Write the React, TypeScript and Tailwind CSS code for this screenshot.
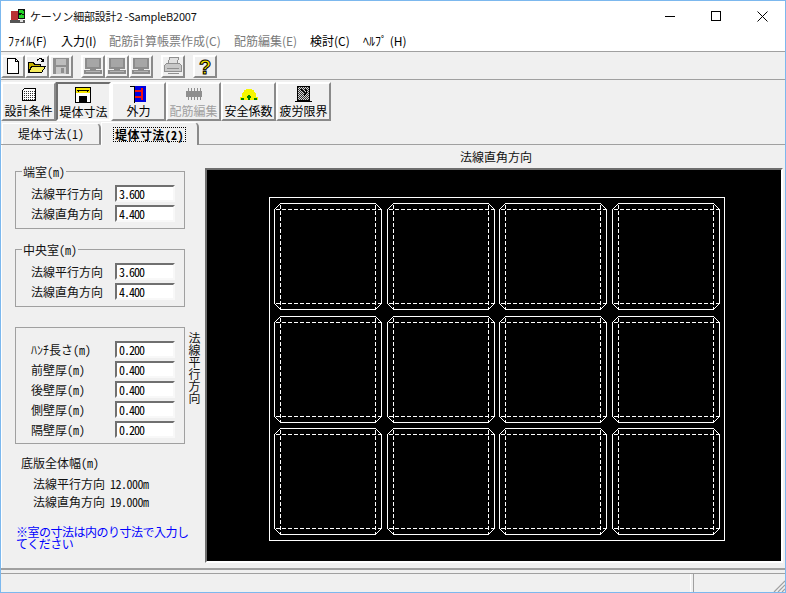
const jp = "font-['Noto_Sans_CJK_JP','Noto_Sans',sans-serif]";
const half = "[font-feature-settings:'hwid']";

function Cell({ x, y }: { x: number; y: number }) {
  const w = 107;
  const h = 106;
  const c = 6;
  const x1 = x + w;
  const y1 = y + h;
  return (
    <g>
      <polygon
        points={`${x + c},${y} ${x1 - c},${y} ${x1},${y + c} ${x1},${y1 - c} ${x1 - c},${y1} ${x + c},${y1} ${x},${y1 - c} ${x},${y + c}`}
        fill="none"
        stroke="#fff"
      />
      <g stroke="#fff" strokeDasharray="4 2" fill="none">
        <path d={`M${x + 1} ${y + c}H${x1 - 1}`} />
        <path d={`M${x + 1} ${y1 - c}H${x1 - 1}`} />
        <path d={`M${x + c} ${y + 1}V${y1 - 1}`} />
        <path d={`M${x1 - c} ${y + 1}V${y1 - 1}`} />
      </g>
    </g>
  );
}

function Drawing() {
  const xs = [67.5, 180.5, 292.5, 405.5];
  const ys = [33.5, 146.5, 258.5];
  return (
    <svg width="574" height="391" viewBox="0 0 574 391" shapeRendering="crispEdges" className="block bg-black">
      <rect x="62.5" y="27.5" width="455" height="343" fill="none" stroke="#fff" />
      {ys.map((y) => xs.map((x) => <Cell key={`${x}-${y}`} x={x} y={y} />))}
    </svg>
  );
}

function SmallBtn({ children, className = "" }: { children: React.ReactNode; className?: string }) {
  return (
    <div
      className={`w-6 h-[23px] flex items-center justify-center border-2 border-t-white border-l-white border-r-[#8a8a8a] border-b-[#8a8a8a] ${className}`}
    >
      {children}
    </div>
  );
}

function IconSvg({ children, size = 16 }: { children: React.ReactNode; size?: number }) {
  return (
    <svg width={size} height={size} viewBox={`0 0 ${size} ${size}`} shapeRendering="crispEdges" className="block">
      {children}
    </svg>
  );
}

function Monitor() {
  return (
    <IconSvg size={18}>
      <rect x="1" y="1" width="16" height="11" fill="#8c8c8c" />
      <rect x="3" y="2" width="12" height="8" fill="#a6a6a6" />
      <rect x="6" y="12" width="6" height="1" fill="#8c8c8c" />
      <rect x="0" y="13" width="18" height="4" fill="#8c8c8c" />
      <rect x="2" y="14" width="14" height="1" fill="#b4b4b4" />
    </IconSvg>
  );
}

function BigBtn({
  label,
  icon,
  pressed,
  disabled,
}: {
  label: string;
  icon: React.ReactNode;
  pressed?: boolean;
  disabled?: boolean;
}) {
  return (
    <div
      className={`w-[55px] h-[39px] flex flex-col items-center border-2 ${
        pressed
          ? "border-t-[#6e6e6e] border-l-[#6e6e6e] border-r-white border-b-white pt-[2px]"
          : "border-t-white border-l-white border-r-[#8a8a8a] border-b-[#8a8a8a] pt-px"
      }`}
    >
      <div className="h-[18px] flex items-center justify-center">{icon}</div>
      <div className={`text-xs leading-[15px] whitespace-nowrap ${disabled ? "text-[#a0a0a0]" : "text-black"}`}>
        {label}
      </div>
    </div>
  );
}

function Field({ label, value }: { label: string; value: string }) {
  return (
    <div className="flex items-center h-[17px]">
      <div className={`w-[84px] text-xs leading-[17px] text-[#111] whitespace-nowrap ${half}`}>{label}</div>
      <input
        readOnly
        value={value}
        className={`w-[60px] h-[17px] bg-white pl-[2px] text-xs leading-none tracking-[-1px] text-black outline-none border-2 border-t-[#707070] border-l-[#707070] border-r-[#f8f8f8] border-b-[#f8f8f8] ${half}`}
      />
    </div>
  );
}

function Group({ title, fields }: { title: string; fields: string[][] }) {
  return (
    <div className="relative w-[170px] h-[58px] border border-[#a0a0a0] pl-[15px] pt-[13px] flex flex-col gap-[3px]">
      <div className={`absolute left-[6px] top-[-8px] bg-[#f0f0f0] px-[1px] text-xs leading-[15px] text-[#111] ${half}`}>
        {title}
      </div>
      {fields.map(([l, v]) => (
        <Field key={l} label={l} value={v} />
      ))}
    </div>
  );
}

export default function App() {
  return (
    <div
      className={`w-[786px] h-[593px] flex flex-col overflow-hidden bg-[#f0f0f0] border border-[#7cb8ee] text-black ${jp}`}
    >
      {/* タイトルバー */}
      <div className="h-[30px] shrink-0 bg-white flex items-center">
        <div className="ml-[8px] mr-[4px]">
          <IconSvg size={17}>
            <rect x="2" y="3" width="7" height="10" fill="#b83232" />
            <rect x="1" y="12" width="15" height="3" fill="#555" />
            <rect x="9" y="1" width="7" height="10" fill="#111" />
            <path d="M10 2h4v1h1v3h-3v1h3v3h-5V7h3V5h-3z" fill="#22d428" />
            <rect x="11" y="11" width="3" height="3" fill="#ddd" />
          </IconSvg>
        </div>
        <div className="text-[11px] tracking-[-0.2px] text-[#111] whitespace-nowrap">ケーソン細部設計2 -SampleB2007</div>
        <div className="ml-auto flex h-full">
          <div className="w-[46px] flex items-center justify-center">
            <div className="w-[10px] h-px bg-black" />
          </div>
          <div className="w-[46px] flex items-center justify-center">
            <div className="w-[10px] h-[10px] border border-black" />
          </div>
          <div className="w-[46px] flex items-center justify-center">
            <svg width="11" height="11" viewBox="0 0 11 11" stroke="#000" fill="none">
              <path d="M0.5 0.5l10 10M10.5 0.5l-10 10" />
            </svg>
          </div>
        </div>
      </div>

      {/* メニュー */}
      <div className="h-[20px] shrink-0 bg-white flex items-center pl-[7px] text-xs whitespace-nowrap">
        <span className="w-[53px]">ﾌｧｲﾙ(F)</span>
        <span className="w-[48px]">入力(I)</span>
        <span className="w-[125px] text-[#7a7a7a]">配筋計算帳票作成(C)</span>
        <span className="w-[76px] text-[#7a7a7a]">配筋編集(E)</span>
        <span className="w-[53px]">検討(C)</span>
        <span>ﾍﾙﾌﾟ (H)</span>
      </div>
      <div className="h-px shrink-0 bg-[#a0a0a0]" />

      {/* ツールバー */}
      <div className="h-[27px] shrink-0 flex items-center pt-[1px]">
        <SmallBtn>
          <IconSvg>
            <path d="M2.500 0.500h8l3 3v12h-11z" fill="#fff" stroke="#000" />
            <path d="M10.500 0.500v3h3" fill="none" stroke="#000" />
          </IconSvg>
        </SmallBtn>
        <SmallBtn>
          <IconSvg size={18}>
            <path d="M0.500 5.500h5l1 2h6v8h-12z" fill="#c4b000" stroke="#000" />
            <path d="M0.500 15.500l3-6h14l-4 6z" fill="#f4ea5a" stroke="#000" />
            <path d="M9 3.500c1-2 4-2.500 5-1l1 1M15.500 1.500v3h-3" fill="none" stroke="#000" />
          </IconSvg>
        </SmallBtn>
        <SmallBtn>
          <IconSvg size={18}>
            <rect x="1" y="1" width="16" height="16" fill="#8f8f8f" />
            <rect x="4" y="2" width="10" height="6" fill="#bdbdbd" />
            <rect x="4" y="10" width="10" height="7" fill="#c8c8c8" />
            <rect x="9" y="11" width="3" height="5" fill="#8f8f8f" />
          </IconSvg>
        </SmallBtn>
        <SmallBtn className="ml-[8px]">
          <Monitor />
        </SmallBtn>
        <SmallBtn>
          <Monitor />
        </SmallBtn>
        <SmallBtn>
          <Monitor />
        </SmallBtn>
        <SmallBtn className="ml-[8px]">
          <IconSvg size={18}>
            <path d="M5.500 0.500h9l-1 6h-9z" fill="#e0e0e0" stroke="#8f8f8f" />
            <path d="M0.500 8.500l2-2h13l2 2v6h-17z" fill="#c8c8c8" stroke="#8f8f8f" />
            <path d="M3 11h12M4 16.500h11" stroke="#8f8f8f" />
          </IconSvg>
        </SmallBtn>
        <SmallBtn className="ml-[8px]">
          <svg width="14" height="19" viewBox="0 0 14 19" className="block">
            <text
              x="7"
              y="16.500"
              textAnchor="middle"
              fontFamily="Liberation Sans"
              fontWeight="700"
              fontSize="20"
              fill="#f6e600"
              stroke="#000"
              strokeWidth="1"
            >
              ?
            </text>
          </svg>
        </SmallBtn>
      </div>
      <div className="h-px shrink-0 bg-[#a0a0a0]" />

      {/* 大ボタン */}
      <div className="h-[42px] shrink-0 flex items-end pb-px">
        <BigBtn
          label="設計条件"
          icon={
            <IconSvg>
              <path d="M3.500 2.500h11v12h-13v-10z" fill="#fff" stroke="#000" />
              <path d="M3 5h11M3 7h11M3 9h11M3 11h11M3 13h11" stroke="#333" strokeDasharray="1 1" />
            </IconSvg>
          }
        />
        <BigBtn
          pressed
          label="堤体寸法"
          icon={
            <IconSvg size={17}>
              <rect x="0.500" y="0.500" width="15" height="15" fill="#fff" stroke="#000" />
              <rect x="1" y="1" width="14" height="5" fill="#f6e600" />
              <path d="M2 3.500h12" stroke="#000" />
              <path d="M3 2.500h1v2H3zM12 2.500h1v2h-1z" fill="#000" />
              <rect x="4" y="9" width="8" height="7" fill="#000" />
            </IconSvg>
          }
        />
        <BigBtn
          label="外力"
          icon={
            <IconSvg size={17}>
              <path d="M0 0.500h5M4.500 0v17" stroke="#000" />
              <rect x="5" y="0" width="11" height="16" fill="#0000e0" />
              <path d="M5 5h7M5 11h7M11.500 2v12" stroke="#f01010" strokeWidth="2" />
              <path d="M5 5l2-2v4zM5 11l2-2v4z" fill="#f01010" />
            </IconSvg>
          }
        />
        <BigBtn
          disabled
          label="配筋編集"
          icon={
            <svg width="18" height="12" viewBox="0 0 18 12" shapeRendering="crispEdges" className="block">
              <rect x="1" y="3" width="16" height="6" fill="#8f8f8f" />
              <path d="M3 1.500h1M6 1.500h1M9 1.500h1M12 1.500h1M15 1.500h1M3 10h1M6 10h1M9 10h1M12 10h1M15 10h1" stroke="#8f8f8f" strokeWidth="3" />
            </svg>
          }
        />
        <BigBtn
          label="安全係数"
          icon={
            <svg width="18" height="13" viewBox="0 0 18 13" className="block" shapeRendering="crispEdges">
              <path d="M2 12V8a7 7.500 0 0 1 14 0v4z" fill="#f6f600" />
              <rect x="0" y="9" width="18" height="3" fill="#f6f600" />
              <path d="M1 10.500h3M7 8.500h4M14 10.500h3" stroke="#008000" strokeWidth="2" />
              <path d="M9 6.500v5" stroke="#008000" strokeWidth="2" />
            </svg>
          }
        />
        <BigBtn
          label="疲労限界"
          icon={
            <IconSvg size={17}>
              <defs>
                <pattern id="hatch" width="2" height="2" patternUnits="userSpaceOnUse">
                  <rect width="2" height="2" fill="#d8d8d8" />
                  <rect width="1" height="1" fill="#333" />
                  <rect x="1" y="1" width="1" height="1" fill="#333" />
                </pattern>
              </defs>
              <rect x="2.500" y="0.500" width="12" height="14" fill="url(#hatch)" stroke="#000" />
              <path d="M0 15.500h17" stroke="#000" />
              <path d="M5 3l3 2 2 2M10 3l2 3-3 4" stroke="#000" fill="none" />
            </IconSvg>
          }
        />
      </div>

      {/* タブ */}
      <div className="h-[23px] shrink-0 flex items-end relative">
        <div className="w-[99px] h-[21px] ml-px mb-px flex items-center justify-center text-xs text-[#111] border-t border-l border-white border-r-2 border-r-[#8a8a8a] rounded-tr-[5px] whitespace-nowrap">
          <span className={half}>堤体寸法(1)</span>
        </div>
        <div className="w-[98px] h-[23px] z-10 flex items-center justify-center text-xs font-bold border-t border-l border-white border-r-2 border-r-[#8a8a8a] rounded-tr-[5px] bg-[#f0f0f0] whitespace-nowrap">
          <span className={`px-[1px] leading-[13px] border border-dotted border-black tracking-[0.4px] ${half}`}>
            堤体寸法(2)
          </span>
        </div>
        <div className="absolute left-0 right-0 bottom-0 h-px bg-[#a0a0a0]" />
      </div>

      {/* 本体 */}
      <div className="flex-1 flex min-h-0 border-l border-white">
        <div className="w-[204px] shrink-0 pl-[13px] pt-[26px] flex flex-col">
          <Group
            title="端室(m)"
            fields={[
              ["法線平行方向", "3.600"],
              ["法線直角方向", "4.400"],
            ]}
          />
          <div className="mt-[20px]">
            <Group
              title="中央室(m)"
              fields={[
                ["法線平行方向", "3.600"],
                ["法線直角方向", "4.400"],
              ]}
            />
          </div>
          <div className="mt-[20px] flex">
            <div className="w-[170px] h-[117px] border border-[#a0a0a0] pl-[15px] pt-[13px] flex flex-col gap-[3px]">
              <Field label="ﾊﾝﾁ長さ(m)" value="0.200" />
              <Field label="前壁厚(m)" value="0.400" />
              <Field label="後壁厚(m)" value="0.400" />
              <Field label="側壁厚(m)" value="0.400" />
              <Field label="隔壁厚(m)" value="0.200" />
            </div>
            <div className="ml-[3px] mt-[5px] h-[72px] text-xs leading-[12px] text-[#111] [writing-mode:vertical-rl]">
              法線平行方向
            </div>
          </div>
          <div className={`ml-[6px] mt-[11px] text-xs leading-[15px] text-[#111] ${half}`}>底版全体幅(m)</div>
          <div className={`ml-[18px] mt-[6px] flex text-xs leading-[15px] text-[#111] whitespace-nowrap ${half}`}>
            <span className="w-[77px]">法線平行方向</span>
            <span className="tracking-[-0.5px]">12.000m</span>
          </div>
          <div className={`ml-[18px] mt-[3px] flex text-xs leading-[15px] text-[#111] whitespace-nowrap ${half}`}>
            <span className="w-[77px]">法線直角方向</span>
            <span className="tracking-[-0.5px]">19.000m</span>
          </div>
          <div className="ml-[1px] mt-[17px] w-[176px] text-xs leading-[12px] tracking-[-0.5px] text-[#0000ff]">
            ※室の寸法は内のり寸法で入力してください
          </div>
        </div>

        <div className="w-[576px] -ml-px shrink-0 flex flex-col">
          <div className="h-[23px] flex items-center justify-center text-xs text-[#111] pl-[6px]">法線直角方向</div>
          <div className="w-[578px] border-t-2 border-l-2 border-t-[#6e6e6e] border-l-[#6e6e6e] border-r-2 border-b-2 border-r-white border-b-white">
            <Drawing />
          </div>
        </div>
      </div>

      {/* ステータスバー */}
      <div className="h-[24px] shrink-0 flex flex-col">
        <div className="h-[2px] bg-[#a0a0a0]" />
        <div className="h-[3px]" />
        <div className="flex-1 flex border-t border-[#a0a0a0]">
          <div className="w-[690px] border-r border-white" />
          <div className="ml-[2px] flex-1 border-l border-[#a0a0a0] relative">
            <svg width="12" height="12" viewBox="0 0 12 12" className="absolute right-0 bottom-0" stroke="#a0a0a0" strokeWidth="1.200">
              <path d="M12 1L1 12M12 5L5 12M12 9L9 12" />
            </svg>
          </div>
        </div>
      </div>
    </div>
  );
}
